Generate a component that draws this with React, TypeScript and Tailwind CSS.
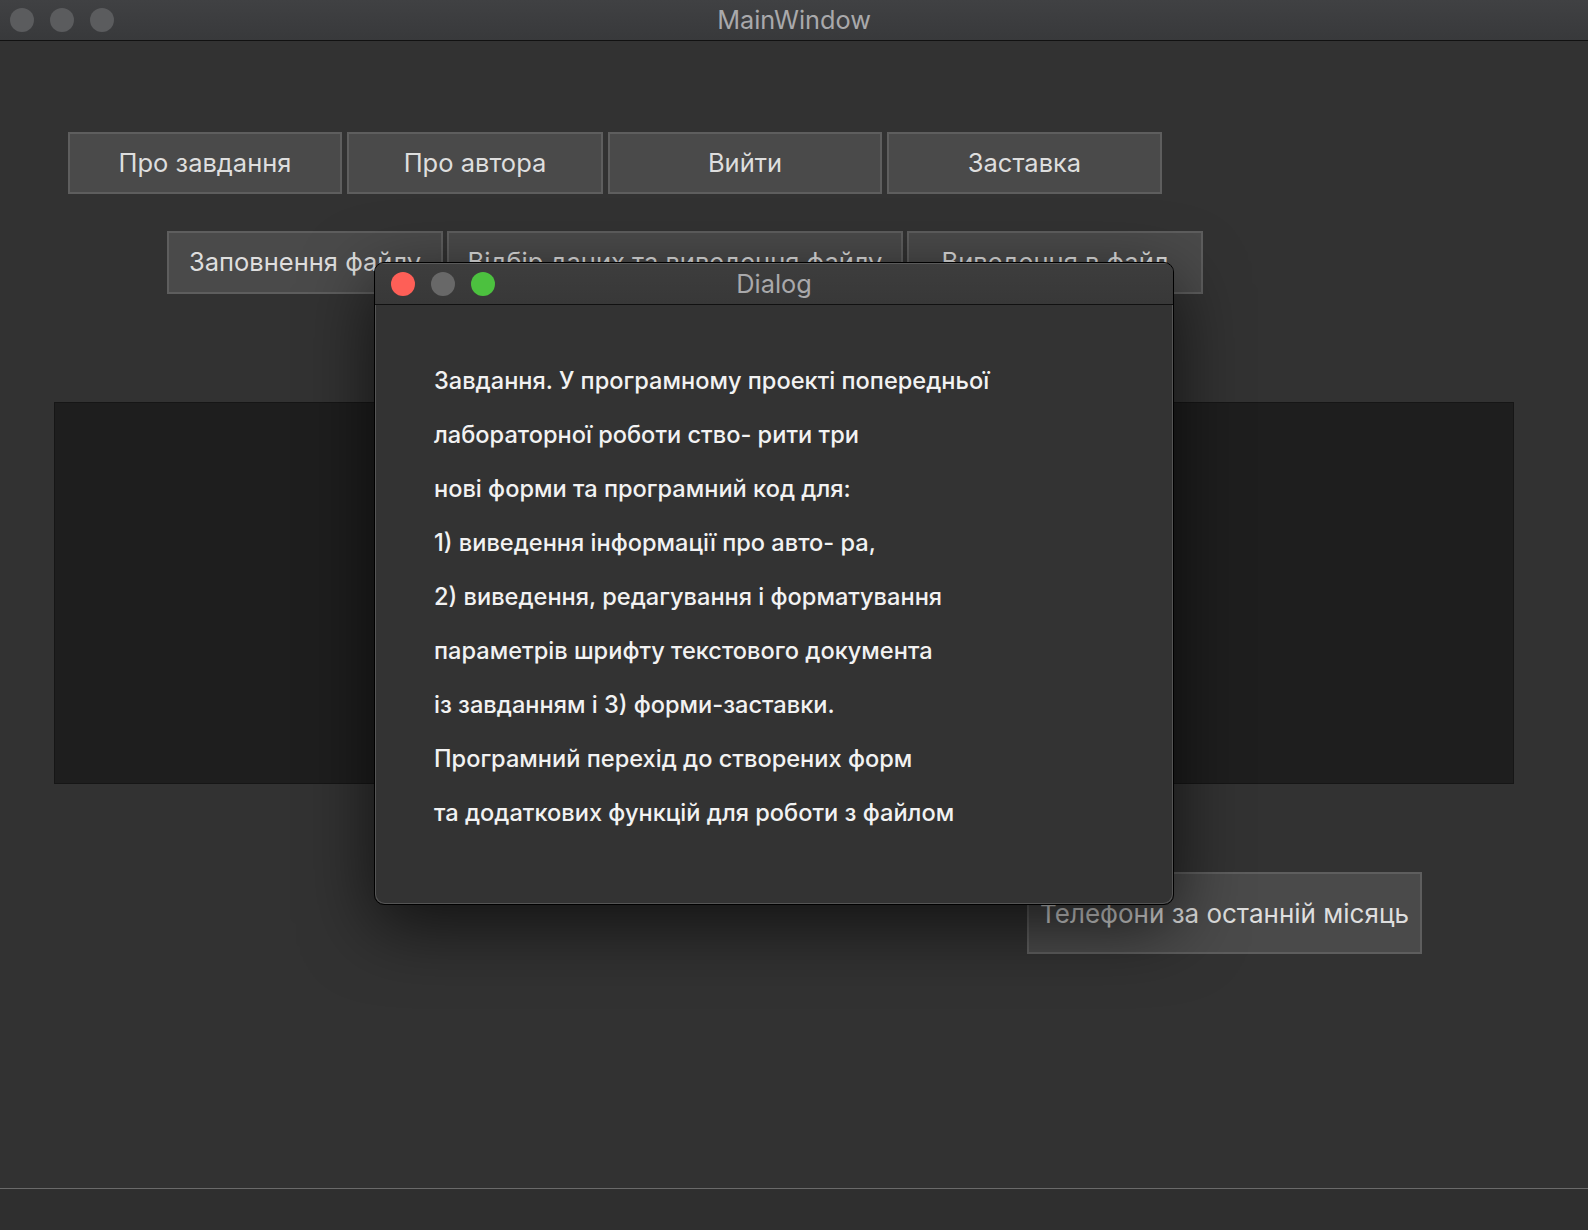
import React from "react";

const font = { fontFamily: 'Inter, "Noto Sans", "Liberation Sans", sans-serif' };

function Btn({ w, label, className = "" }: { w: string; label: string; className?: string }) {
  return (
    <div
      className={`${w} h-[62px] flex items-center justify-center border-2 border-[#5e5e5e] bg-[#4a4a4a] text-[25.5px] text-[#dedede] whitespace-nowrap overflow-hidden ${className}`}
    >
      {label}
    </div>
  );
}

const lines = [
  "Завдання. У програмному проекті попередньої",
  "лабораторної роботи ство- рити три",
  "нові форми та програмний код для:",
  "1) виведення інформації про авто- ра,",
  "2) виведення, редагування і форматування",
  "параметрів шрифту текстового документа",
  "із завданням і 3) форми-заставки.",
  "Програмний перехід до створених форм",
  "та додаткових функцій для роботи з файлом",
];

export default function App() {
  return (
    <div className="relative w-[1588px] h-[1230px] overflow-hidden bg-[#323232] flex flex-col" style={font}>
      {/* Title bar */}
      <div className="relative h-[41px] shrink-0 bg-gradient-to-b from-[#404143] to-[#38393b] border-b border-[#111] flex items-center justify-center">
        <div className="absolute left-[10px] top-[8px] flex gap-[16px]">
          <div className="w-[24px] h-[24px] rounded-full bg-[#5b5c5e]" />
          <div className="w-[24px] h-[24px] rounded-full bg-[#5b5c5e]" />
          <div className="w-[24px] h-[24px] rounded-full bg-[#5b5c5e]" />
        </div>
        <span className="text-[25.3px] text-[#a9a9ab]">MainWindow</span>
      </div>

      {/* Content */}
      <div className="flex-1 flex flex-col">
        <div className="flex gap-[5px] ml-[68px] mt-[91px]">
          <Btn w="w-[274px]" label="Про завдання" />
          <Btn w="w-[256px]" label="Про автора" />
          <Btn w="w-[274px]" label="Вийти" />
          <Btn w="w-[275px]" label="Заставка" />
        </div>
        <div className="flex gap-[4px] ml-[167px] mt-[37px]">
          <Btn w="w-[276px]" label="Заповнення файлу" className="h-[63px]" />
          <Btn w="w-[456px]" label="Відбір даних та виведення файлу" className="h-[63px]" />
          <Btn w="w-[296px]" label="Виведення в файл" className="h-[63px]" />
        </div>
        <div className="ml-[54px] mt-[108px] w-[1460px] h-[382px] bg-[#1e1e1e] border border-[#161616]" />
        <div className="flex ml-[1027px] mt-[88px]">
          <Btn w="w-[395px]" label="Телефони за останній місяць" className="h-[82px] text-[26px]" />
        </div>
        <div className="flex-1" />
        <div className="h-[1px] bg-[#6a6a6a]" />
        <div className="h-[41px] bg-[#2f2f2f]" />
      </div>

      {/* Dialog */}
      <div className="absolute left-[374px] top-[262px] w-[800px] h-[643px] rounded-[10px] border border-black bg-[#333333] shadow-[0_20px_70px_rgba(0,0,0,0.65)] overflow-hidden flex flex-col">
        <div className="relative h-[42px] shrink-0 bg-gradient-to-b from-[#3d3d3d] to-[#383838] border-b border-[#111] border-t border-t-[#5a5a5a] flex items-center justify-center">
          <div className="absolute left-[16px] top-[8px] flex gap-[16px]">
            <div className="w-[24px] h-[24px] rounded-full bg-[#fe5f57]" />
            <div className="w-[24px] h-[24px] rounded-full bg-[#686868]" />
            <div className="w-[24px] h-[24px] rounded-full bg-[#4cc13f]" />
          </div>
          <span className="text-[25.3px] text-[#a9a9ab]">Dialog</span>
        </div>
        <div className="flex-1 border-x border-b border-[#555] rounded-b-[10px] pl-[58px] pt-[49px]">
          {lines.map((l) => (
            <div key={l} className="text-[23.6px] leading-[54px] font-medium text-[#f2f2f2] whitespace-nowrap">
              {l}
            </div>
          ))}
        </div>
      </div>
    </div>
  );
}
